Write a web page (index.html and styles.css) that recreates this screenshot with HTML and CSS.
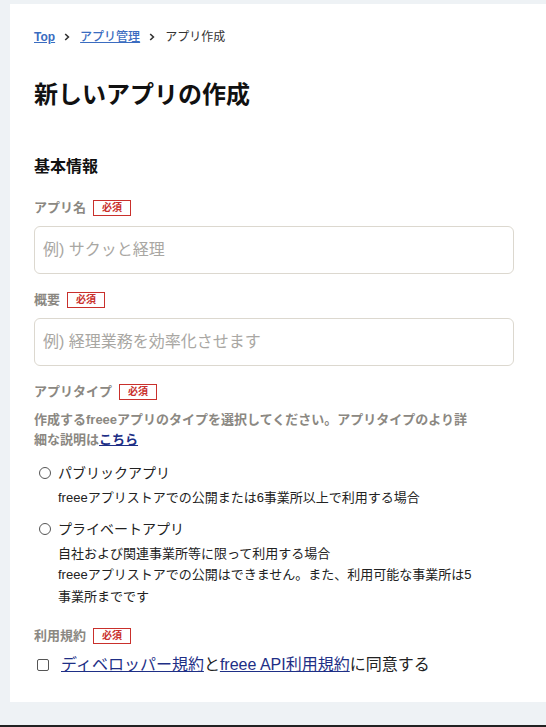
FILE: index.html
```html
<!DOCTYPE html>
<html lang="ja">

<head>
    <meta charset="UTF-8">
    <meta name="viewport" content="width=device-width, initial-scale=1.0">
    <title>新しいアプリの作成</title>
    <link rel="stylesheet" href="styles.css">
</head>

<body>
    <div class="card">
        <!-- パンくず -->
        <nav class="crumbs">
            <a href="#" class="top">Top</a>
            <svg class="sep" width="6" height="8" viewBox="0 0 6 8"><path d="M1.2 1 L4.4 4 L1.2 7" fill="none" stroke="#333" stroke-width="1.6"/></svg>
            <a href="#" class="mid">アプリ管理</a>
            <svg class="sep" width="6" height="8" viewBox="0 0 6 8"><path d="M1.2 1 L4.4 4 L1.2 7" fill="none" stroke="#333" stroke-width="1.6"/></svg>
            <span class="now">アプリ作成</span>
        </nav>

        <h1 class="title">新しいアプリの作成</h1>

        <h2 class="sub">基本情報</h2>

        <div class="field">
            <div class="label">アプリ名<span class="must">必須</span></div>
            <input class="text" type="text" placeholder="例) サクッと経理">
        </div>

        <div class="field">
            <div class="label">概要<span class="must">必須</span></div>
            <input class="text" type="text" placeholder="例) 経理業務を効率化させます">
        </div>

        <div class="field">
            <div class="label">アプリタイプ<span class="must">必須</span></div>
            <p class="help">作成するfreeeアプリのタイプを選択してください。アプリタイプのより詳細な説明は<a href="#">こちら</a></p>
            <ul class="choices">
                <li>
                    <label class="choice"><input type="radio" name="type" class="radio">パブリックアプリ</label>
                    <p class="note">freeeアプリストアでの公開または6事業所以上で利用する場合</p>
                </li>
                <li>
                    <label class="choice"><input type="radio" name="type" class="radio">プライベートアプリ</label>
                    <p class="note">自社および関連事業所等に限って利用する場合<br>freeeアプリストアでの公開はできません。また、利用可能な事業所は5事業所までです</p>
                </li>
            </ul>
        </div>

        <div class="field last">
            <div class="label">利用規約<span class="must">必須</span></div>
            <label class="agree"><input type="checkbox" class="check"><a href="#">ディベロッパー規約</a>と<a href="#">freee API利用規約</a>に同意する</label>
        </div>
    </div>
    <div class="foot"></div>
</body>

</html>
```

FILE: styles.css
```css
* {
    margin: 0;
    padding: 0;
    box-sizing: border-box;
    list-style: none;
}

body {
    background-color: #eef2f5;
    font-family: "Liberation Sans", "Noto Sans CJK JP", sans-serif;
    color: #222;
}

.card {
    margin: 4px 0 0 10px;
    padding: 24px 32px 25px 24px;
    background-color: #fff;
}

.crumbs {
    display: flex;
    align-items: center;
    font-size: 12px;
    line-height: 18px;
}

.crumbs a {
    color: #3a6cc0;
}

.crumbs .top {
    font-weight: bold;
}

.crumbs .mid {
    font-weight: 500;
}

.crumbs .sep {
    margin: 0 10px 0 9px;
}

.crumbs .now {
    color: #333;
}

.title {
    margin-top: 31px;
    font-size: 24px;
    line-height: 36px;
    font-weight: bold;
    color: #111;
}

.sub {
    margin-top: 42px;
    font-size: 16px;
    line-height: 24px;
    font-weight: bold;
    color: #111;
}

.field {
    margin-top: 19px;
}

.field + .field {
    margin-top: 16px;
}

.field.last {
    margin-top: 19px;
}

.label {
    display: flex;
    align-items: center;
    font-size: 13px;
    line-height: 20px;
    font-weight: bold;
    color: #8b8882;
}

.must {
    display: inline-block;
    margin-left: 7px;
    width: 38px;
    height: 16px;
    border: 1px solid #c9302c;
    font-size: 10px;
    line-height: 14px;
    text-align: center;
    color: #c9302c;
}

.text {
    display: block;
    margin-top: 8px;
    width: 480px;
    height: 48px;
    padding: 0 8px;
    border: 1px solid #dcd8cf;
    border-radius: 6px;
    font-family: inherit;
    font-size: 16px;
    color: #222;
    outline: none;
}

.text::placeholder {
    color: #a9a7a3;
}

.help {
    margin-top: 8px;
    width: 440px;
    font-size: 13px;
    line-height: 20px;
    font-weight: bold;
    color: #8b8882;
}

.help a,
.agree a {
    color: #1e2f86;
}

.choices {
    margin-top: 13px;
}

.choices li + li {
    margin-top: 10px;
}

.choice {
    display: flex;
    align-items: center;
    font-size: 14px;
    line-height: 20px;
    color: #222;
}

.radio {
    appearance: none;
    width: 12px;
    height: 12px;
    margin: 0 7px 0 5px;
    border: 1px solid #555;
    border-radius: 50%;
}

.note {
    margin: 4px 0 0 24px;
    width: 420px;
    font-size: 13px;
    line-height: 21.5px;
    color: #222;
}

.agree {
    display: flex;
    align-items: center;
    margin-top: 7px;
    font-size: 16px;
    line-height: 24px;
    color: #222;
}

.check {
    appearance: none;
    width: 12px;
    height: 12px;
    margin: 0 12px 0 3px;
    border: 1px solid #555;
    border-radius: 2px;
}

.foot {
    margin-top: 23px;
    height: 30px;
    background-color: #222;
}
```
